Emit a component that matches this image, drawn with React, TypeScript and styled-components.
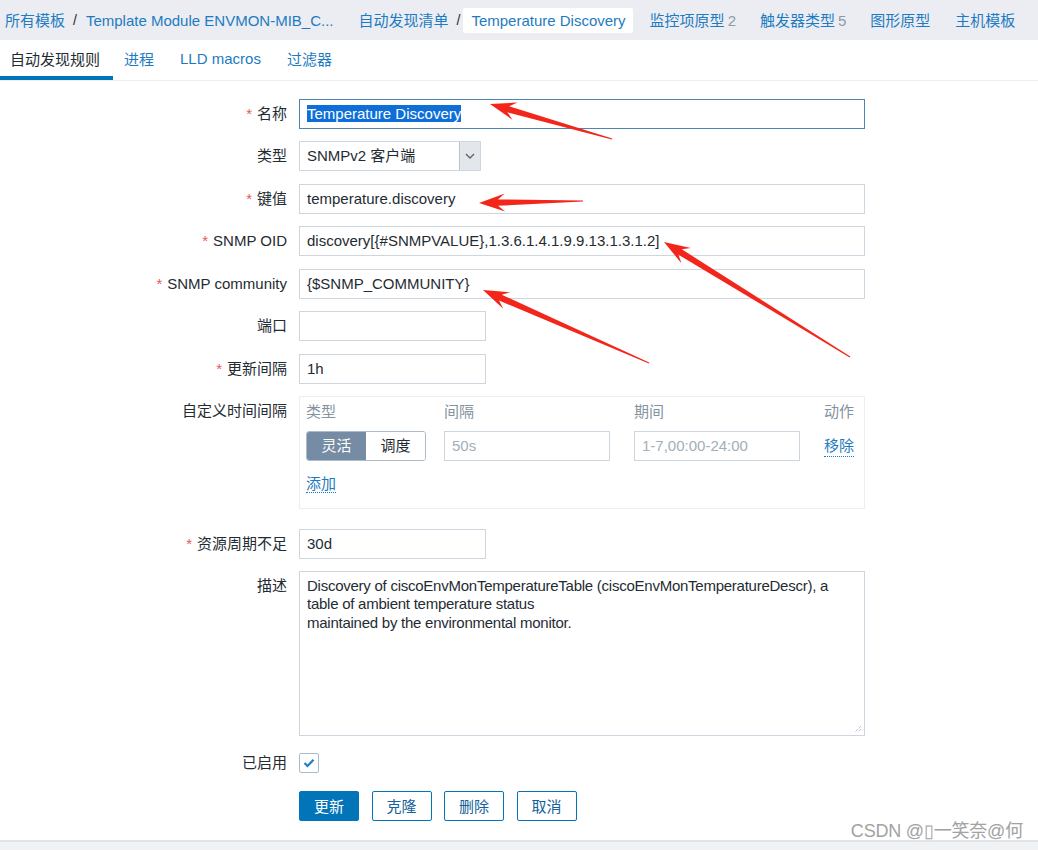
import React from "react";
import styled, { createGlobalStyle } from "styled-components";

const GlobalStyle = createGlobalStyle`
  html, body {
    margin: 0;
    padding: 0;
    background: #ffffff;
  }
  body {
    font-family: "Liberation Sans", Arial, "Noto Sans CJK SC", sans-serif;
    font-size: 15px;
    color: #1f2c33;
  }
`;

const Page = styled.div`
  position: relative;
  width: 1038px;
  height: 850px;
  display: flex;
  flex-direction: column;
  overflow: hidden;
`;

const TopBar = styled.nav`
  height: 40px;
  background: #ebedf2;
  display: flex;
  align-items: center;
  padding-left: 5px;
  white-space: nowrap;
`;

const Crumb = styled.a<{ $current?: boolean }>`
  color: #1e7bc1;
  text-decoration: none;
  line-height: 25px;
  background: ${(p) => (p.$current ? "#ffffff" : "transparent")};
  padding: ${(p) => (p.$current ? "0 7px 0 8px" : "0")};
  border-radius: 2px;
`;

const Sep = styled.span<{ $tight?: boolean }>`
  color: #1f2c33;
  margin: 0 ${(p) => (p.$tight ? 3 : 9)}px 0 8px;
  font-size: 14px;
`;

const CrumbGroup = styled.div<{ $gap: number }>`
  display: flex;
  align-items: center;
  margin-right: ${(p) => p.$gap}px;
`;

const Count = styled.span`
  color: #8d9ba6;
  margin-left: 3px;
`;

const TabBar = styled.div`
  height: 40px;
  display: flex;
  align-items: stretch;
  border-bottom: 1px solid #ebeef3;
`;

const Tab = styled.a<{ $active?: boolean }>`
  display: flex;
  align-items: center;
  padding: 1px ${(p) => (p.$active ? 13 : 16)}px 0 10px;
  margin-right: ${(p) => (p.$active ? "1px" : "0")};
  color: ${(p) => (p.$active ? "#1f2c33" : "#1e7bc1")};
  border-bottom: 4px solid ${(p) => (p.$active ? "#0275b8" : "transparent")};
  text-decoration: none;
`;

const Form = styled.div`
  flex: 1;
  display: grid;
  grid-template-columns: 287px 566px;
  column-gap: 12px;
  row-gap: 12.45px;
  padding-top: 18px;
  align-content: start;
`;

const Label = styled.label<{ $top?: boolean }>`
  text-align: right;
  line-height: 30px;
  white-space: nowrap;
  align-self: ${(p) => (p.$top ? "start" : "stretch")};
`;

const Star = styled.span`
  color: #e45959;
  margin-right: 5px;
`;

const Field = styled.div<{ $short?: boolean; $focus?: boolean; $muted?: boolean }>`
  box-sizing: border-box;
  height: 30px;
  width: ${(p) => (p.$short ? "187px" : "566px")};
  border: 1px solid ${(p) => (p.$focus ? "#4d86b3" : "#cdd5df")};
  background: #ffffff;
  padding: 0 7px;
  line-height: 28px;
  color: ${(p) => (p.$muted ? "#a3aeb8" : "#1f2c33")};
  white-space: nowrap;
  overflow: hidden;
`;

const Selected = styled.span`
  background: #0f6fd8;
  color: #ffffff;
`;

const Select = styled.div`
  box-sizing: border-box;
  width: 182px;
  height: 30px;
  border: 1px solid #cdd5df;
  display: flex;
  align-items: stretch;
`;

const SelectValue = styled.div`
  flex: 1;
  padding: 0 7px;
  line-height: 28px;
`;

const SelectArrow = styled.div`
  width: 20px;
  background: #e3e6ea;
  border-left: 1px solid #b9c1c9;
  display: flex;
  align-items: center;
  justify-content: center;
`;

const IntervalBox = styled.div`
  box-sizing: border-box;
  width: 566px;
  height: 113px;
  border: 1px solid #ebeef3;
  padding: 5px 6px 0;
  margin-bottom: 7px;
  display: grid;
  grid-template-columns: 138px 190px 190px auto;
  grid-template-rows: 20px 30px auto;
  row-gap: 9px;
`;

const ColHead = styled.div`
  color: #8393a0;
  line-height: 20px;
`;

const Toggle = styled.div`
  display: flex;
  width: 120px;
  height: 30px;
  box-sizing: border-box;
  border: 1px solid #acbbc7;
  border-radius: 3px;
  overflow: hidden;
`;

const ToggleOption = styled.div<{ $on?: boolean }>`
  flex: 1;
  line-height: 28px;
  text-align: center;
  background: ${(p) => (p.$on ? "#768ba4" : "#ffffff")};
  color: ${(p) => (p.$on ? "#ffffff" : "#1f2c33")};
`;

const SmallInput = styled(Field)`
  width: 166px;
`;

const DottedLink = styled.a`
  color: #1e7bc1;
  text-decoration: none;
  border-bottom: 1px dotted #1e7bc1;
  line-height: 20px;
  justify-self: start;
  align-self: center;
`;

const AddRow = styled.div`
  grid-column: 1 / -1;
  padding-top: 4px;
`;

const TextArea = styled.div`
  position: relative;
  box-sizing: border-box;
  width: 566px;
  height: 165px;
  border: 1px solid #cdd5df;
  padding: 5px 7px;
  line-height: 18.5px;
  white-space: pre-wrap;
  letter-spacing: -0.25px;
`;

const Grip = styled.svg`
  position: absolute;
  right: 2px;
  bottom: 2px;
`;

const Check = styled.div`
  box-sizing: border-box;
  width: 20px;
  height: 20px;
  margin-top: 5px;
  border: 1px solid #acbbc7;
  border-radius: 2px;
  display: flex;
  align-items: center;
  justify-content: center;
`;

const Buttons = styled.div`
  display: flex;
  gap: 12.5px;
`;

const Button = styled.button<{ $primary?: boolean }>`
  width: 60px;
  height: 30px;
  border-radius: 2px;
  font-family: inherit;
  font-size: 15px;
  cursor: pointer;
  border: 1px solid #0275b8;
  background: ${(p) => (p.$primary ? "#0275b8" : "#ffffff")};
  color: ${(p) => (p.$primary ? "#ffffff" : "#15629b")};
  padding: 0;
`;

const Footer = styled.div`
  height: 8px;
  border-top: 2px solid #dfe4e8;
  background: #f0f2f4;
`;

const Watermark = styled.div`
  position: absolute;
  right: 15px;
  bottom: 8px;
  font-size: 18px;
  color: #a2a2a2;
  text-shadow: 0 0 1px #ffffff, 0 0 2px #ffffff;
  letter-spacing: -0.2px;
`;

const Overlay = styled.svg`
  position: absolute;
  left: 0;
  top: 0;
  pointer-events: none;
`;

type Pt = [number, number];

// red annotation arrow: thin tail, widening shaft, barbed head
function arrow(tail: Pt, tip: Pt, head = 26, half = 9, shaft = 3.2) {
  const dx = tip[0] - tail[0];
  const dy = tip[1] - tail[1];
  const len = Math.hypot(dx, dy);
  const ux = dx / len;
  const uy = dy / len;
  const nx = -uy;
  const ny = ux;
  const at = (d: number, w: number): string =>
    `${(tip[0] - ux * d + nx * w).toFixed(1)},${(tip[1] - uy * d + ny * w).toFixed(1)}`;
  return [
    at(0, 0),
    at(head, half),
    at(head - 7, shaft),
    `${(tail[0] + nx * 0.6).toFixed(1)},${(tail[1] + ny * 0.6).toFixed(1)}`,
    `${(tail[0] - nx * 0.6).toFixed(1)},${(tail[1] - ny * 0.6).toFixed(1)}`,
    at(head - 7, -shaft),
    at(head, -half),
  ].join(" ");
}

const arrows: [Pt, Pt][] = [
  [[612, 139], [490, 104]],
  [[583, 201], [479, 203]],
  [[850, 357], [664, 242]],
  [[649, 363], [483, 290]],
];

const Chevron = () => (
  <svg width="10" height="6" viewBox="0 0 10 6">
    <path d="M1 1 L5 5 L9 1" fill="none" stroke="#5c6670" strokeWidth="1.4" />
  </svg>
);

export default function App() {
  return (
    <>
      <GlobalStyle />
      <Page>
        <TopBar>
          <CrumbGroup $gap={25}>
            <Crumb>所有模板</Crumb>
            <Sep>/</Sep>
            <Crumb>Template Module ENVMON-MIB_C...</Crumb>
          </CrumbGroup>
          <CrumbGroup $gap={17}>
            <Crumb>自动发现清单</Crumb>
            <Sep $tight>/</Sep>
            <Crumb $current>Temperature Discovery</Crumb>
          </CrumbGroup>
          <CrumbGroup $gap={24}>
            <Crumb>监控项原型</Crumb>
            <Count>2</Count>
          </CrumbGroup>
          <CrumbGroup $gap={24}>
            <Crumb>触发器类型</Crumb>
            <Count>5</Count>
          </CrumbGroup>
          <CrumbGroup $gap={25}>
            <Crumb>图形原型</Crumb>
          </CrumbGroup>
          <CrumbGroup $gap={0}>
            <Crumb>主机模板</Crumb>
          </CrumbGroup>
        </TopBar>

        <TabBar>
          <Tab $active>自动发现规则</Tab>
          <Tab>进程</Tab>
          <Tab>LLD macros</Tab>
          <Tab>过滤器</Tab>
        </TabBar>

        <Form>
          <Label><Star>*</Star>名称</Label>
          <Field $focus>
            <Selected>Temperature Discovery</Selected>
          </Field>

          <Label>类型</Label>
          <Select>
            <SelectValue>SNMPv2 客户端</SelectValue>
            <SelectArrow><Chevron /></SelectArrow>
          </Select>

          <Label><Star>*</Star>键值</Label>
          <Field>temperature.discovery</Field>

          <Label><Star>*</Star>SNMP OID</Label>
          <Field>discovery[{"{#SNMPVALUE}"},1.3.6.1.4.1.9.9.13.1.3.1.2]</Field>

          <Label><Star>*</Star>SNMP community</Label>
          <Field>{"{$SNMP_COMMUNITY}"}</Field>

          <Label>端口</Label>
          <Field $short />

          <Label><Star>*</Star>更新间隔</Label>
          <Field $short>1h</Field>

          <Label $top>自定义时间间隔</Label>
          <IntervalBox>
            <ColHead>类型</ColHead>
            <ColHead>间隔</ColHead>
            <ColHead>期间</ColHead>
            <ColHead>动作</ColHead>
            <Toggle>
              <ToggleOption $on>灵活</ToggleOption>
              <ToggleOption>调度</ToggleOption>
            </Toggle>
            <SmallInput $muted>50s</SmallInput>
            <SmallInput $muted>1-7,00:00-24:00</SmallInput>
            <DottedLink>移除</DottedLink>
            <AddRow>
              <DottedLink>添加</DottedLink>
            </AddRow>
          </IntervalBox>

          <Label><Star>*</Star>资源周期不足</Label>
          <Field $short>30d</Field>

          <Label $top>描述</Label>
          <TextArea>
            {"Discovery of ciscoEnvMonTemperatureTable (ciscoEnvMonTemperatureDescr), a table of ambient temperature status\nmaintained by the environmental monitor."}
            <Grip width="8" height="8" viewBox="0 0 8 8">
              <path d="M7 1 L1 7 M7 4 L4 7" stroke="#9aa4ad" strokeWidth="1" strokeDasharray="1 1" />
            </Grip>
          </TextArea>

          <Label>已启用</Label>
          <div>
            <Check>
              <svg width="12" height="10" viewBox="0 0 12 10">
                <path d="M1.5 5 L4.5 8 L10.5 1.8" fill="none" stroke="#1e7fc7" strokeWidth="2.2" />
              </svg>
            </Check>
          </div>

          <div />
          <Buttons>
            <Button $primary>更新</Button>
            <Button>克隆</Button>
            <Button>删除</Button>
            <Button>取消</Button>
          </Buttons>
        </Form>

        <Footer />
        <Watermark>CSDN @▯一笑奈@何</Watermark>

        <Overlay width="1038" height="850" viewBox="0 0 1038 850">
          {arrows.map(([tail, tip], i) => (
            <polygon key={i} points={arrow(tail, tip)} fill="#f3261b" />
          ))}
        </Overlay>
      </Page>
    </>
  );
}
